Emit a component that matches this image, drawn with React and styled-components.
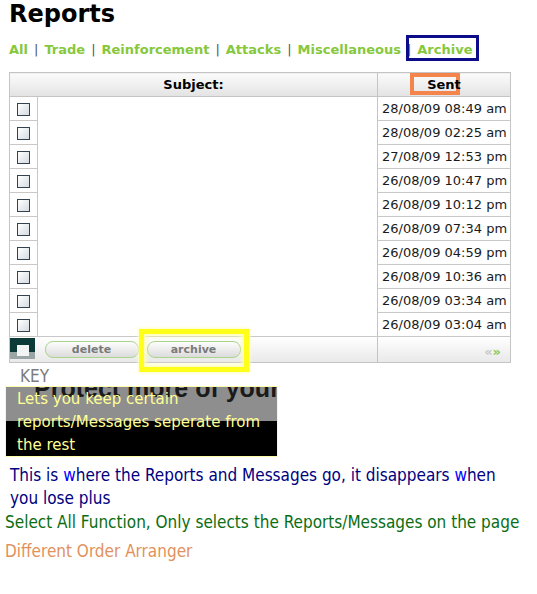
import React from 'react';
import styled, { createGlobalStyle } from 'styled-components';

const GlobalStyle = createGlobalStyle`
    html, body {
        margin: 0;
        padding: 0;
        background: #fff;
    }
    body {
        font-family: "DejaVu Sans", Verdana, sans-serif;
    }
`;

const Page = styled.div`
    width: 537px;
    height: 594px;
    overflow: hidden;
    position: relative;
`;

const Title = styled.h1`
    margin: 0 0 0 9px;
    font-size: 24px;
    line-height: 28px;
    font-weight: bold;
    color: #000;
`;

const Nav = styled.div`
    margin: 14px 0 0 9px;
    font-size: 13px;
    line-height: 16px;
    font-weight: bold;
    white-space: nowrap;
`;

const NavLink = styled.span`
    position: relative;
    color: #86c83c;
`;

const Sep = styled.span`
    color: #555;
    font-weight: normal;
    margin: 0 6px;
`;

const NavMark = styled.span`
    position: absolute;
    left: -11px;
    right: -7px;
    top: -7px;
    bottom: -4px;
    border: 3px solid #0c0c8a;
`;

const Table = styled.table`
    margin: 14px 0 0 9px;
    width: 501px;
    table-layout: fixed;
    border-collapse: collapse;
    border: 1px solid #c4c4c4;
    font-size: 13px;
`;

const HeadCell = styled.th`
    position: relative;
    height: 23px;
    padding: 0;
    background: linear-gradient(#fbfbfb, #e3e3e3);
    border: 1px solid #c4c4c4;
    font-weight: bold;
    text-align: center;
    color: #000;
`;

const HeadText = styled.span`
    position: relative;
    z-index: 1;
`;

const SentMark = styled.span`
    position: absolute;
    left: 32px;
    top: 0;
    width: 42px;
    height: 14px;
    border: 4px solid #f2844c;
`;

const CheckCell = styled.td`
    height: 23px;
    padding: 0;
    border-bottom: 1px solid #c8c8c8;
    border-right: 1px solid #c8c8c8;
    text-align: center;
`;

const SubjectCell = styled.td`
    padding: 0;
`;

const DateCell = styled.td`
    padding: 0 0 0 4px;
    border-left: 1px solid #c4c4c4;
    border-bottom: 1px solid #c8c8c8;
    color: #1a1a1a;
    white-space: nowrap;
`;

const Check = styled.span`
    display: inline-block;
    vertical-align: middle;
    width: 11px;
    height: 11px;
    border: 1px solid #33424e;
    background: linear-gradient(135deg, #fff, #d4dbe0);
    margin-left: -1px;
`;

const FootRow = styled.tr`
    background: linear-gradient(#ffffff, #e8e8e8);
`;

const FootCell = styled.td`
    height: 25px;
    padding: 0;
    border-top: 1px solid #c8c8c8;
    border-left: ${(p) => (p.$line ? '1px solid #c4c4c4' : 'none')};
    text-align: ${(p) => p.$align || 'left'};
    vertical-align: middle;
`;

const SelectAllMark = styled.div`
    position: relative;
    width: 25px;
    height: 21px;
    background: linear-gradient(#0c3a38 0 65%, #9aa6a6 65% 100%);
    margin-top: -2px;
`;

const SelectAllBox = styled.span`
    position: absolute;
    left: 7px;
    top: 7px;
    width: 12px;
    height: 11px;
    background: #f2f4f4;
`;

const Buttons = styled.div`
    display: flex;
    gap: 8px;
    padding-left: 7px;
`;

const Button = styled.span`
    position: relative;
    display: block;
    width: 92px;
    height: 15px;
    border: 1px solid #a9d48a;
    border-radius: 8px;
    background: linear-gradient(#fdfdfd, #dcdcdc);
    color: #7a7a7a;
    font-size: 11px;
    font-weight: bold;
    line-height: 15px;
    text-align: center;
`;

const ButtonMark = styled.span`
    position: absolute;
    left: -9px;
    right: -9px;
    top: -13px;
    bottom: -15px;
    border: 5px solid #ffff1a;
    box-shadow: inset 0 0 4px 2px #ffffb0, 0 0 3px 1px #ffffc0;
`;

const Pager = styled.span`
    font-size: 13px;
    font-weight: bold;
    padding-right: 9px;
    position: relative;
    top: 2px;
`;

const PagerArrow = styled.span`
    color: ${(p) => (p.$on ? '#8cc850' : '#c8c8c8')};
`;

const Key = styled.div`
    margin: 4px 0 0 20px;
    font-family: "DejaVu Sans Condensed", "DejaVu Sans", sans-serif;
    font-stretch: condensed;
    font-size: 17px;
    line-height: 19px;
    color: #7c7c7c;
`;

const KeyBox = styled.div`
    position: relative;
    overflow: hidden;
    margin: 0 0 0 5px;
    width: 271px;
    border: 1px solid #fdfda8;
    background: linear-gradient(#8e8e8e 0 34px, #000 34px 100%);
`;

const Behind = styled.div`
    position: absolute;
    left: 28px;
    top: -11px;
    font-family: "Liberation Sans", Arial, sans-serif;
    font-size: 25px;
    line-height: 25px;
    font-weight: bold;
    color: #1a1a1a;
    white-space: nowrap;
`;

const KeyText = styled.div`
    position: relative;
    padding-left: 11px;
    font-family: "DejaVu Sans Condensed", "DejaVu Sans", sans-serif;
    font-stretch: condensed;
    font-size: 16.7px;
    line-height: 23px;
    color: #ffff96;
`;

const Note = styled.div`
    box-sizing: border-box;
    width: 532px;
    margin: ${(p) => p.$margin || '0'};
    padding-left: ${(p) => p.$indent || '5px'};
    padding-right: ${(p) => p.$right || '0'};
    font-family: "DejaVu Sans Condensed", "DejaVu Sans", sans-serif;
    font-stretch: condensed;
    font-size: 17px;
    line-height: 23px;
    color: ${(p) => p.$color};
`;

const Bright = styled.span`
    color: #0000ff;
`;

const dates = [
    '28/08/09 08:49 am',
    '28/08/09 02:25 am',
    '27/08/09 12:53 pm',
    '26/08/09 10:47 pm',
    '26/08/09 10:12 pm',
    '26/08/09 07:34 pm',
    '26/08/09 04:59 pm',
    '26/08/09 10:36 am',
    '26/08/09 03:34 am',
    '26/08/09 03:04 am',
];

const tabs = ['All', 'Trade', 'Reinforcement', 'Attacks', 'Miscellaneous'];

const App = () => {
    return (
        <Page>
            <GlobalStyle />
            <Title>Reports</Title>
            <Nav>
                {tabs.map((t) => (
                    <React.Fragment key={t}>
                        <NavLink>{t}</NavLink>
                        <Sep>|</Sep>
                    </React.Fragment>
                ))}
                <NavLink>
                    Archive
                    <NavMark />
                </NavLink>
            </Nav>

            <Table>
                <colgroup>
                    <col style={{ width: 28 }} />
                    <col style={{ width: 340 }} />
                    <col style={{ width: 133 }} />
                </colgroup>
                <thead>
                    <tr>
                        <HeadCell colSpan={2}>Subject:</HeadCell>
                        <HeadCell>
                            <SentMark />
                            <HeadText>Sent</HeadText>
                        </HeadCell>
                    </tr>
                </thead>
                <tbody>
                    {dates.map((d) => (
                        <tr key={d}>
                            <CheckCell>
                                <Check />
                            </CheckCell>
                            <SubjectCell />
                            <DateCell>{d}</DateCell>
                        </tr>
                    ))}
                </tbody>
                <tfoot>
                    <FootRow>
                        <FootCell>
                            <SelectAllMark>
                                <SelectAllBox />
                            </SelectAllMark>
                        </FootCell>
                        <FootCell>
                            <Buttons>
                                <Button>delete</Button>
                                <Button>
                                    archive
                                    <ButtonMark />
                                </Button>
                            </Buttons>
                        </FootCell>
                        <FootCell $line $align="right">
                            <Pager>
                                <PagerArrow>«</PagerArrow>
                                <PagerArrow $on>»</PagerArrow>
                            </Pager>
                        </FootCell>
                    </FootRow>
                </tfoot>
            </Table>

            <Key>KEY</Key>
            <KeyBox>
                <Behind>Protect more of your</Behind>
                <KeyText>
                    Lets you keep certain
                    <br />
                    reports/Messages seperate from
                    <br />
                    the rest
                </KeyText>
            </KeyBox>

            <Note $color="#000080" $indent="10px" $right="20px" $margin="7px 0 0 0">
                This is <Bright>w</Bright>here the Reports and Messages go, it disappears <Bright>w</Bright>hen you lose plus
            </Note>
            <Note $color="#0a6e14" $margin="1px 0 0 0">
                Select All Function, Only selects the Reports/Messages on the page
            </Note>
            <Note $color="#e2915c" $margin="6px 0 0 0">
                Different Order Arranger
            </Note>
        </Page>
    );
};

export default App;
